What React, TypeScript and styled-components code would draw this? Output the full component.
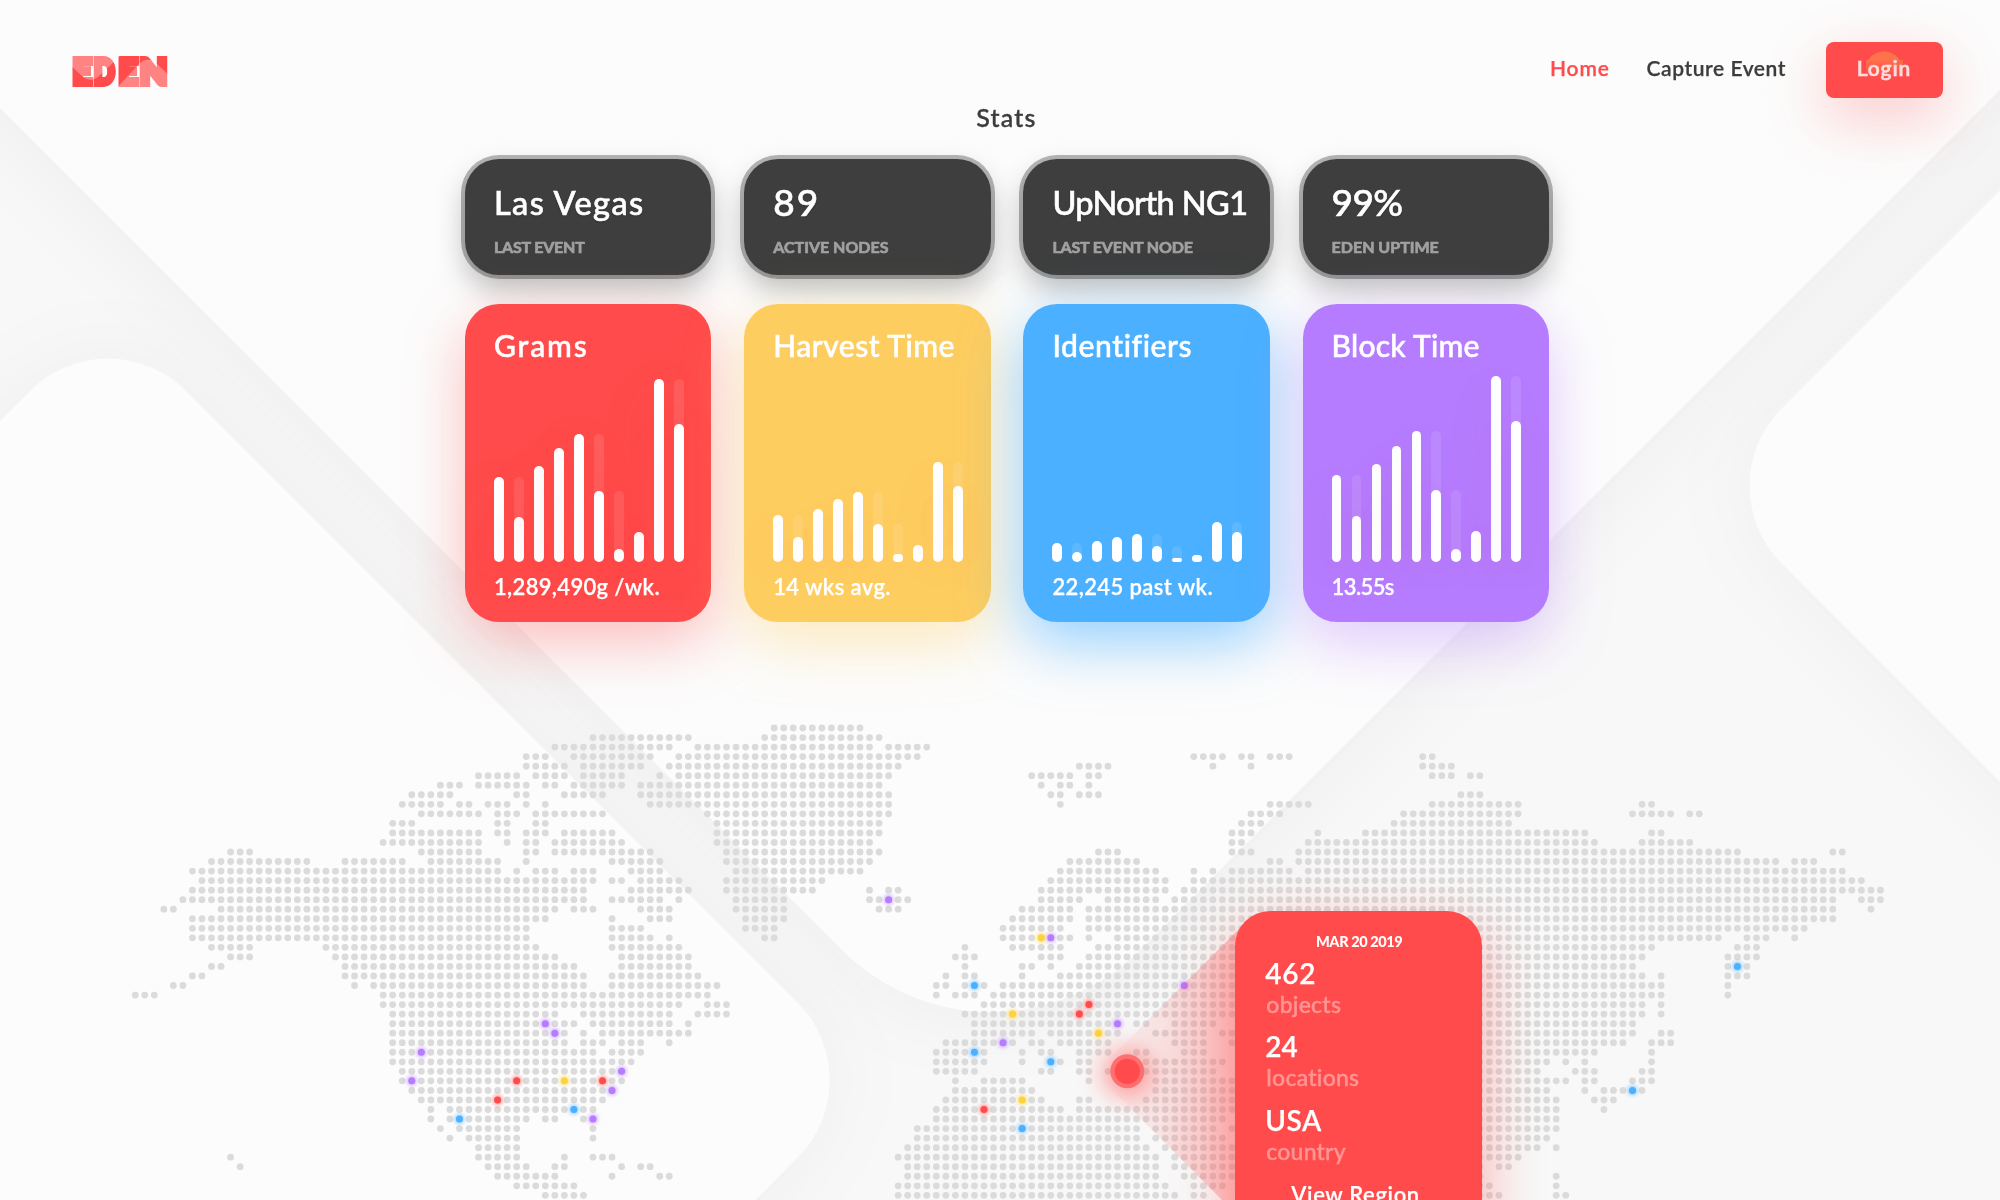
import React from 'react';
import styled, { createGlobalStyle } from 'styled-components';

const RED = '#ff4b4b';
const YELLOW = '#fecd5f';
const BLUE = '#4bb0ff';
const PURPLE = '#b57cff';

const GlobalStyle = createGlobalStyle`
  *, *::before, *::after { box-sizing: border-box; }
  html, body { margin: 0; padding: 0; overflow: hidden; }
  body {
    background: #fcfcfc;
    color: #3c3c3c;
    font-family: Lato, "Open Sans", "Liberation Sans", sans-serif;
    font-weight: 500;
    font-variant-ligatures: none;
    -webkit-text-stroke: 0.25px currentColor;
  }
`;

/* ---------- page frame ---------- */

const Page = styled.div`
  position: relative;
  width: 100%;
  height: 1200px;
  overflow: hidden;
  display: flex;
  flex-direction: column;
`;

const Backdrop = styled.svg`
  position: absolute;
  inset: 0;
  z-index: -1;
`;

/* ---------- header ---------- */

const Header = styled.header`
  display: flex;
  justify-content: space-between;
  align-items: center;
  height: 98px;
  padding: 42px 57px 0 72px;
`;

const Logo = styled.svg`
  display: block;
  margin-top: 2px;
  overflow: visible;
  font-family: Lato, sans-serif;
  font-weight: 900;
  font-size: 35px;
  -webkit-text-stroke: 0;
`;

const Nav = styled.nav`
  display: flex;
  align-items: center;
`;

const NavLink = styled.a<{ $active?: boolean; $track: number; $gap: number }>`
  color: ${(p) => (p.$active ? RED : '#3c3c3c')};
  font-size: 21px;
  font-weight: 600;
  line-height: 30px;
  margin-right: ${(p) => p.$gap}px;
  margin-top: -5px;
  letter-spacing: ${(p) => p.$track}px;
  white-space: nowrap;
`;

const LoginButton = styled.button`
  width: 117px;
  height: 56px;
  border: 0;
  border-radius: 8px;
  padding: 0 1px 5px 0;
  font: 600 21px/30px Lato, sans-serif;
  letter-spacing: 0.9px;
  color: #ffdcdc;
  -webkit-text-stroke-width: 0.5px;
  background:
    radial-gradient(circle 19px at 58px 28px, #ff734b 0 18px, transparent 19px) 0 0 / 100% 18px no-repeat,
    linear-gradient(#ff6e4b, ${RED}) 40px 18px / 37px 18px no-repeat,
    ${RED};
  box-shadow: 0 20px 60px rgba(255, 75, 75, 0.3);
`;

/* ---------- stats ---------- */

const StatsRow = styled.div`
  display: flex;
  padding-left: 15px;
`;

const Stats = styled.main`
  width: 1085px;
  margin: 0 auto;
`;

const Heading = styled.h1`
  margin: 4px 2px 26.5px 0;
  text-align: center;
  font-size: 25px;
  line-height: 30px;
  font-weight: 500;
  letter-spacing: 1.2px;
  -webkit-text-stroke-width: 0.4px;
`;

const CardGrid = styled.div`
  display: grid;
  grid-template-columns: repeat(4, 246.4px);
  column-gap: 32.8px;
  row-gap: 29px;
`;

const InfoCard = styled.section`
  height: 116px;
  padding: 24px 0 0 29px;
  border-radius: 34px;
  background: #3e3e3e;
  box-shadow: 0 0 0 4px rgba(0, 0, 0, 0.28), 0 14px 30px rgba(0, 0, 0, 0.26);
  white-space: nowrap;
`;

const InfoValue = styled.div<{ $large?: boolean; $track: number }>`
  color: #fff;
  font-size: ${(p) => (p.$large ? 37 : 32.5)}px;
  line-height: ${(p) => (p.$large ? 37 : 40)}px;
  margin-bottom: ${(p) => (p.$large ? 17 : 14)}px;
  letter-spacing: ${(p) => p.$track}px;
  text-shadow: 0 1px 2px rgba(0, 0, 0, 0.3);
  -webkit-text-stroke-width: 0.6px;
`;

const InfoLabel = styled.div<{ $track: number }>`
  color: #a0a0a0;
  font-size: 16px;
  font-weight: 700;
  line-height: 20px;
  letter-spacing: ${(p) => p.$track}px;
  -webkit-text-stroke-width: 0.7px;
`;

const ChartCard = styled.section<{ $color: string; $glow: string }>`
  display: flex;
  flex-direction: column;
  height: 318px;
  padding: 23.2px 0 0 29px;
  border-radius: 34px;
  background: ${(p) => p.$color};
  box-shadow: 0 20px 60px ${(p) => p.$glow};
  color: #fff;
  white-space: nowrap;
`;

const ChartTitle = styled.h2<{ $track: number }>`
  margin: 0;
  font-size: 30px;
  font-weight: 500;
  line-height: 36px;
  letter-spacing: ${(p) => p.$track}px;
  -webkit-text-stroke-width: 0.5px;
`;

const Bars = styled.div`
  display: flex;
  align-items: flex-end;
  gap: 10.3px;
  height: 199px;
`;

const BarTrack = styled.div`
  display: flex;
  align-items: flex-end;
  width: 9.7px;
  border-radius: 5px;
  background: rgba(255, 255, 255, 0.1);
`;

const Bar = styled.div<{ $tint: string }>`
  width: 100%;
  border-radius: 5px;
  background: #fff;
  box-shadow: 0 10px 50px ${(p) => p.$tint};
`;

const ChartNote = styled.div<{ $track: number }>`
  margin-top: 11.5px;
  font-size: 22px;
  line-height: 28px;
  font-weight: 600;
  letter-spacing: ${(p) => p.$track}px;
`;

/* ---------- map ---------- */

const MapLayer = styled.div`
  position: absolute;
  inset: 0;
  z-index: -1;
`;

const MapSvg = styled.svg`
  display: block;
`;

const Popup = styled.aside`
  position: absolute;
  left: 1235.3px;
  top: 911.2px;
  width: 246.7px;
  height: 340px;
  padding: 21.5px 0 0 30px;
  display: flex;
  flex-direction: column;
  border-radius: 35px;
  background: ${RED};
  box-shadow: 0 20px 60px rgba(255, 75, 75, 0.45);
  color: #fff;
`;

const PopupDate = styled.div`
  padding-right: 29px;
  text-align: center;
  font-size: 14.5px;
  line-height: 18px;
  font-weight: 900;
  letter-spacing: -0.4px;
  -webkit-text-stroke-width: 0;
`;

const Entries = styled.dl`
  display: flex;
  flex-direction: column;
  gap: 11.5px;
  margin: 5px 0 0;
`;

const Entry = styled.div`
  display: flex;
  flex-direction: column-reverse;
`;

const EntryLabel = styled.dt<{ $track: number }>`
  margin-left: 1px;
  color: #ff9595;
  font-size: 23px;
  line-height: 28px;
  letter-spacing: ${(p) => p.$track}px;
  -webkit-text-stroke-width: 0.4px;
`;

const EntryValue = styled.dd<{ $track: number }>`
  margin: 0;
  font-size: 28px;
  line-height: 34px;
  font-weight: 600;
  letter-spacing: ${(p) => p.$track}px;
`;

const PopupLink = styled.a`
  margin: 16.5px 0 0 26px;
  font-size: 22px;
  line-height: 28px;
  font-weight: 600;
  letter-spacing: 0.65px;
`;

/* ---------- data ---------- */

const INFO = [
  { value: 'Las Vegas', label: 'LAST EVENT', track: 1.35, labelTrack: -0.2 },
  { value: '89', label: 'ACTIVE NODES', track: 2, labelTrack: 0, large: true },
  { value: 'UpNorth NG1', label: 'LAST EVENT NODE', track: -0.6, labelTrack: -0.15 },
  { value: '99%', label: 'EDEN UPTIME', track: -0.6, labelTrack: 0, large: true },
];

const CHARTS = [
  {
    title: 'Grams', note: '1,289,490g /wk.', track: 1.9, noteTrack: 0.35, color: RED,
    glow: 'rgba(255,75,75,.35)', tint: 'rgba(255,75,75,.2)',
    bars: [85, 44.7, 96, 113.7, 128, 70.3, 12.7, 29.7, 182.7, 138],
  },
  {
    title: 'Harvest Time', note: '14 wks avg.', track: 0.5, noteTrack: 0.4, color: YELLOW,
    glow: 'rgba(254,205,95,.4)', tint: 'rgba(255,75,75,.09)',
    bars: [46.7, 24.7, 52.7, 62.3, 70, 38, 7.3, 16.3, 99.7, 75.7],
  },
  {
    title: 'Identifiers', note: '22,245 past wk.', track: 0.6, noteTrack: 0.4, color: BLUE,
    glow: 'rgba(75,176,255,.6)', tint: 'rgba(60,140,255,.06)',
    bars: [18.7, 9.7, 21, 24.7, 28, 15.3, 3.3, 6.7, 40, 30],
  },
  {
    title: 'Block Time', note: '13.55s', track: 0.25, noteTrack: -0.6, color: PURPLE,
    glow: 'rgba(181,124,255,.4)', tint: 'rgba(255,60,75,.1)',
    bars: [86.7, 45.7, 97.7, 116, 130.3, 71.3, 13, 30.3, 185.7, 140.3],
  },
];

const ENTRIES = [
  { value: '462', label: 'objects', track: 0.7, labelTrack: 0.25 },
  { value: '24', label: 'locations', track: -0.1, labelTrack: 0.25 },
  { value: 'USA', label: 'country', track: 0.5, labelTrack: 0.2 },
];

/* Land cells of the dotted world map: one line per row, as column ranges. */
const LAND = [
  '67-76',
  '48-58 66-78',
  '44-56 59-77 79-83',
  '41-43 46-54 57-82 111-114 116-117 119-121 135-136',
  '41-45 47-53 56-80 99-102 113 117 135-138',
  '36-40 42-45 47-51 55 57-79 94-98 100-101 136-138 140-141',
  '32-34 36-41 43-44 46-51 53-78 95 97-98 100',
  '29-33 40-41 45-49 53-79 96-97 99-101 139-141',
  '28-32 34-35 37-39 41 43 54-79 97 119-123 136-145 158-159',
  '30-36 38-40 42-49 60-79 117-120 133-145 157-161 163-164',
  '27-29 38-39 42-43 61-78 116-118 132-144',
  '27-36 38-39 41-43 45-50 61-78 115-117 124 129-152 159-160',
  '26-36 39 41-42 44-51 61-77 115-116 123-153 158-163',
  '10-12 30-36 41-42 44-54 62-78 101-103 115-117 122-168 178-179',
  '8-18 22-28 31-38 41 50-55 62-77 98-105 119-120 122-172 174-176',
  '6-38 40 42-44 46-48 52-55 63-76 97-107 111 113 115-121 123-179',
  '7-48 50-51 53-57 62-72 96-108 111-181',
  '6-47 52-58 62-71 77 79-80 95-108 110-183',
  '5-47 50-55 57 63-68 77-81 95-99 102-107 109-178 181-183',
  '3-4 9-44 46-48 53-56 63-68 78-80 93-98 100-178 182',
  '6-43 50 54-56 64-68 92-98 100-178',
  '6-41 50-53 64-67 91-97 100-175',
  '6-41 50-54 56 66-67 91-98 100 103-166 169-171 174',
  '8-12 20-42 50-57 87 92-97 101-159 168-170',
  '10-12 21-44 51-58 86-88 95-97 100-158 167-170',
  '8-9 22-46 51-58 87 93-94 96 99-157 167-169',
  '6-7 22-47 50-59 85 87-88 93 97-158 160 167-169',
  '4-5 23 25-47 50-61 84-85 87-89 91-160 167',
  '0-2 26-60 84 86-88 90-160 167',
  '26-57 60-62 89-158 160',
  '27-44 47-56 59-62 87-158 160',
  '27-46 48-56 58 88-103 105-106 109-113 140-157',
  '27-45 47 49-58 88-94 96-103 107-112 114-115 140-157 160-161',
  '27-45 47-49 51-53 56 85-92 94-95 97-102 109-112 115 140-156 159-161',
  '27-48 50-53 84-89 93 95-96 99-102 105-106 110-112 140-153 159',
  '27-52 84-89 93 96-97 99-100 106-114 140-148 150 152 159',
  '28-51 84-88 95-96 99-100 102 106-113 140-147 151-153 158-159',
  '28-51 86 89-93 100 107-115 140-150 152-153 157-159',
  '29-50 86-94 107-115 140-148 152 154-158',
  '30-49 85-95 99-100 106-115 140-149 153-155',
  '31 33-48 84-97 99-115 140-149 154',
  '31 33-41 43-44 47-48 84-114 140-149',
  '32 34-40 48 82-105 107-113 115 140-149',
  '33 35-40 48 82-105 107-114 140-148',
  '36-40 81-106 108-115 140-147 149',
  '10 36-40 45 48-50 80-107 109-115 140-145',
  '11 37-41 44-45 51 53-54 81-107 109-115 140-141 143-144',
  '38-44 50 55-56 81-107 110-115 141 149',
  '40-46 80-108 111-114 141-142 149',
  '43-47 80-109 111-112 141-143 149-150',
];

/* Event markers: [column, row, colour]. */
const EVENTS: [number, number, string][] = [
  [43, 31, PURPLE], [44, 32, PURPLE], [30, 34, PURPLE], [29, 37, PURPLE], [51, 36, PURPLE],
  [50, 38, PURPLE], [48, 41, PURPLE], [79, 18, PURPLE], [96, 22, PURPLE], [103, 31, PURPLE],
  [91, 33, PURPLE], [110, 27, PURPLE],
  [40, 37, RED], [38, 39, RED], [49, 37, RED], [89, 40, RED], [100, 29, RED], [99, 30, RED],
  [45, 37, '#ffd13b'], [95, 22, '#ffd13b'], [92, 30, '#ffd13b'], [101, 32, '#ffd13b'], [93, 39, '#ffd13b'],
  [34, 41, BLUE], [46, 40, BLUE], [88, 27, BLUE], [88, 34, BLUE], [96, 35, BLUE], [93, 42, BLUE],
  [168, 25, BLUE], [157, 38, BLUE],
];

const STEP = 9.537;
const cellX = (c: number) => +(135.2 + c * STEP).toFixed(2);
const cellY = (r: number) => +(728 + r * STEP).toFixed(2);
const isEvent = (c: number, r: number) => EVENTS.some((e) => e[0] === c && e[1] === r);

const LAND_CELLS = LAND.flatMap((line, r) =>
  line.split(' ').flatMap((run) => {
    const [from, to = from] = run.split('-').map(Number);
    return Array.from({ length: to - from + 1 }, (_, i) => [from + i, r]);
  }),
).filter(([c, r]) => !isEvent(c, r));

/* ---------- parts ---------- */

function Scenery() {
  return (
    <Backdrop width="2000" height="1200" viewBox="0 0 2000 1200">
      <defs>
        <filter id="soft" filterUnits="userSpaceOnUse" x="-1400" y="-1400" width="4400" height="4400">
          <feGaussianBlur stdDeviation="42" />
        </filter>
      </defs>
      <rect width="2000" height="1200" fill="#f8f8f8" />
      <g fill="#000" fillOpacity="0.048" filter="url(#soft)">
        <rect width="1800" height="1800" rx="210" transform="translate(991 1099) rotate(-135)" />
      </g>
      <g fill="#000" fillOpacity="0.04" filter="url(#soft)">
        <rect width="1085" height="1085" rx="110" transform="translate(108 313) rotate(45)" />
        <rect width="1085" height="1085" rx="110" transform="translate(1704 486) rotate(-45)" />
      </g>
      <g fill="#fcfcfc">
        <rect width="1800" height="1800" rx="210" transform="translate(991 1099) rotate(-135)" />
        <rect width="1085" height="1085" rx="110" transform="translate(108 313) rotate(45)" />
        <rect width="1085" height="1085" rx="110" transform="translate(1704 486) rotate(-45)" />
      </g>
    </Backdrop>
  );
}

const LETTERS = [
  { ch: 'E', x: 0.8, w: 19 },
  { ch: 'D', x: 22, w: 20.5 },
  { ch: 'E', x: 46.8, w: 19 },
  { ch: 'N', x: 68, w: 27 },
];

function EdenLogo() {
  return (
    <Logo width="96" height="31" viewBox="0 0 96 31">
      <defs>
        <pattern id="eden-fill" patternUnits="userSpaceOnUse" x="-4" y="-4" width="108" height="40">
          <g transform="translate(4 4)">
            <rect x="-4" y="-4" width="108" height="40" fill={RED} />
            <path d="M-4 7V-4H52L44 4L28 19Q19 28 10 20Z" fill="#ff8383" />
            <path d="M41 36L66 9Q75 -1 85 8L104 26V36Z" fill="#ff8383" />
          </g>
        </pattern>
      </defs>
      {LETTERS.map((l, i) => (
        <text
          key={i}
          x={l.x}
          y="28.2"
          textLength={l.w}
          lengthAdjust="spacingAndGlyphs"
          fill="url(#eden-fill)"
          stroke="url(#eden-fill)"
          strokeWidth="5.8"
        >
          {l.ch}
        </text>
      ))}
    </Logo>
  );
}

function WorldMap() {
  return (
    <MapLayer>
      <MapSvg width="2000" height="1200" viewBox="0 0 2000 1200">
        <defs>
          <filter id="halo" x="-200%" y="-200%" width="500%" height="500%">
            <feGaussianBlur stdDeviation="2.2" />
          </filter>
          <filter id="pin-halo" x="-200%" y="-200%" width="500%" height="500%">
            <feGaussianBlur stdDeviation="13" />
          </filter>
          <linearGradient id="beam" gradientUnits="userSpaceOnUse" x1="1100" y1="0" x2="1245" y2="0">
            <stop offset="0" stopColor={RED} stopOpacity="0" />
            <stop offset="0.4" stopColor={RED} stopOpacity="0.12" />
            <stop offset="1" stopColor={RED} stopOpacity="0.36" />
          </linearGradient>
        </defs>
        <g fill="#dbdbdb">
          {LAND_CELLS.map(([c, r]) => (
            <circle key={`${c}-${r}`} cx={cellX(c)} cy={cellY(r)} r="3.4" />
          ))}
        </g>
        {EVENTS.map(([c, r, color]) => (
          <g key={`${c}-${r}`} fill={color}>
            <circle cx={cellX(c)} cy={cellY(r)} r="4.6" opacity="0.7" filter="url(#halo)" />
            <circle cx={cellX(c)} cy={cellY(r)} r="3.5" />
          </g>
        ))}
        <path d="M1095 1073L1250 918V1228Z" fill="url(#beam)" />
        <circle cx="1127.3" cy="1073" r="25" fill={RED} opacity="0.5" filter="url(#pin-halo)" />
        <circle cx="1127.3" cy="1071.3" r="17" fill="#ff6f6f" />
        <circle cx="1127.3" cy="1071.3" r="12.6" fill={RED} />
      </MapSvg>
      <Popup>
        <PopupDate>MAR 20 2019</PopupDate>
        <Entries>
          {ENTRIES.map((e) => (
            <Entry key={e.label}>
              <EntryLabel $track={e.labelTrack}>{e.label}</EntryLabel>
              <EntryValue $track={e.track}>{e.value}</EntryValue>
            </Entry>
          ))}
        </Entries>
        <PopupLink>View Region</PopupLink>
      </Popup>
    </MapLayer>
  );
}

/* A falling bar keeps a faint track as tall as the bar before it. */
function BarChart({ bars, tint }: { bars: number[]; tint: string }) {
  return (
    <Bars>
      {bars.map((h, i) => (
        <BarTrack key={i} style={{ height: i > 0 ? Math.max(h, bars[i - 1]) : h }}>
          <Bar $tint={tint} style={{ height: h }} />
        </BarTrack>
      ))}
    </Bars>
  );
}

export default function App() {
  return (
    <Page>
      <GlobalStyle />
      <Scenery />
      <WorldMap />
      <Header>
        <EdenLogo />
        <Nav>
          <NavLink $active $track={0.8} $gap={37}>Home</NavLink>
          <NavLink $track={0.55} $gap={40}>Capture Event</NavLink>
          <LoginButton>Login</LoginButton>
        </Nav>
      </Header>
      <StatsRow>
        <Stats>
          <Heading>Stats</Heading>
          <CardGrid>
            {INFO.map((c) => (
              <InfoCard key={c.label}>
                <InfoValue $large={c.large} $track={c.track}>{c.value}</InfoValue>
                <InfoLabel $track={c.labelTrack}>{c.label}</InfoLabel>
              </InfoCard>
            ))}
            {CHARTS.map((c) => (
              <ChartCard key={c.title} $color={c.color} $glow={c.glow}>
                <ChartTitle $track={c.track}>{c.title}</ChartTitle>
                <BarChart bars={c.bars} tint={c.tint} />
                <ChartNote $track={c.noteTrack}>{c.note}</ChartNote>
              </ChartCard>
            ))}
          </CardGrid>
        </Stats>
      </StatsRow>
    </Page>
  );
}
